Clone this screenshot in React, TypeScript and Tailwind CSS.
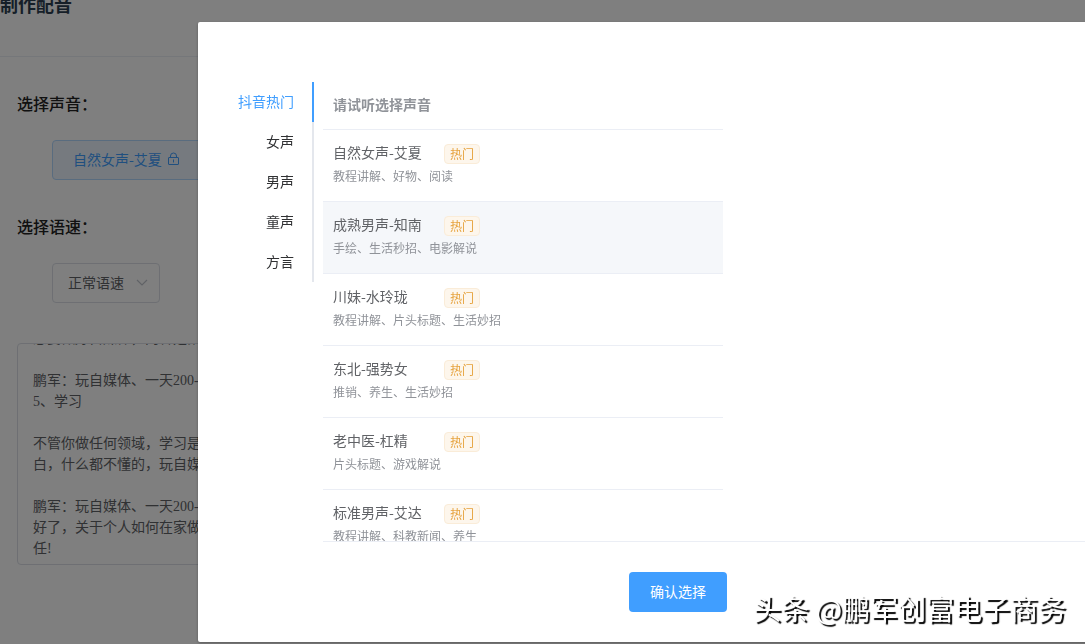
import { useEffect, useRef, useState } from "react";

type Voice = {
  name: string;
  scenes: string;
};

const categories = ["抖音热门", "女声", "男声", "童声", "方言"];

const voices: Voice[] = [
  { name: "自然女声-艾夏", scenes: "教程讲解、好物、阅读" },
  { name: "成熟男声-知南", scenes: "手绘、生活秒招、电影解说" },
  { name: "川妹-水玲珑", scenes: "教程讲解、片头标题、生活妙招" },
  { name: "东北-强势女", scenes: "推销、养生、生活妙招" },
  { name: "老中医-杠精", scenes: "片头标题、游戏解说" },
  { name: "标准男声-艾达", scenes: "教程讲解、科教新闻、养生" },
];

const script = `想要做好自媒体，内容是第一位的

鹏军：玩自媒体、一天200-
5、学习

不管你做任何领域，学习是
白，什么都不懂的，玩自媒

鹏军：玩自媒体、一天200-
好了，关于个人如何在家做
任!`;

function LockIcon() {
  return (
    <svg viewBox="0 0 14 14" className="h-3.5 w-3.5" fill="none" stroke="currentColor" aria-hidden="true">
      <rect x="1.5" y="5.5" width="10" height="7" rx="0.5" />
      <path d="M3.5 5.5V4a3 3 0 0 1 6 0v1.5M6.5 7.5v3" />
    </svg>
  );
}

function ChevronIcon() {
  return (
    <svg
      viewBox="0 0 12 8"
      className="pointer-events-none absolute top-4 right-3 h-2 w-3 text-[#c0c4cc]"
      fill="none"
      stroke="currentColor"
      strokeWidth="1.2"
      aria-hidden="true"
    >
      <path d="M1 1l5 5L11 1" />
    </svg>
  );
}

function DubbingForm() {
  const textRef = useRef<HTMLTextAreaElement>(null);

  // keep the end of the script in view
  useEffect(() => {
    if (textRef.current) textRef.current.scrollTop = textRef.current.scrollHeight;
  }, []);

  return (
    <div className="min-h-screen bg-white">
      <header className="h-[57px] overflow-hidden border-b border-[#ebeef5]">
        <h1 className="text-lg leading-2 font-bold text-[#2c3e50]">制作配音</h1>
      </header>

      <main className="px-[17px] pt-[34px]">
        <h2 className="text-base leading-6 font-medium text-[#222]">选择声音：</h2>
        <button
          type="button"
          className="mt-[25px] ml-[35px] flex h-10 w-[200px] items-center gap-[5px] rounded border border-[#b3d8ff] bg-[#ecf5ff] px-5 pb-0.5 text-sm text-[#409eff]"
        >
          自然女声-艾夏
          <LockIcon />
        </button>

        <h2 className="mt-[34px] text-base leading-6 font-medium text-[#222]">
          <label htmlFor="speed">选择语速：</label>
        </h2>
        <div className="relative mt-[25px] ml-[35px] w-[108px]">
          <select
            id="speed"
            className="h-10 w-full appearance-none rounded border border-[#dcdfe6] bg-white px-[15px] pb-0.5 text-sm text-[#606266]"
          >
            <option>正常语速</option>
          </select>
          <ChevronIcon />
        </div>

        <textarea
          ref={textRef}
          aria-label="配音文案"
          defaultValue={script}
          className="mt-10 block h-[222px] w-full resize-none overflow-hidden rounded border border-[#dcdfe6] px-[15px] py-[5px] font-['Liberation_Serif','Noto_Sans_CJK_SC',serif] text-sm leading-[21px] text-[#606266]"
        />
      </main>
    </div>
  );
}

function VoiceRow({ voice, selected, onSelect }: { voice: Voice; selected: boolean; onSelect: () => void }) {
  return (
    <tr onClick={onSelect} className={`h-[72px] border-b border-[#ebeef5] ${selected ? "bg-[#f5f7fa]" : "bg-white"}`}>
      <td className="px-2.5 pt-3 pb-3 align-top">
        <div className="flex h-[23px] items-start text-sm leading-[21px] text-[#606266]">
          <span className="w-[111px]">{voice.name}</span>
          <span className="mt-0.5 h-5 rounded border border-[#faecd8] bg-[#fdf6ec] px-[5px] text-xs leading-[18px] text-[#e6a23c]">
            热门
          </span>
        </div>
        <p className="text-xs leading-[21px] text-[#909399]">{voice.scenes}</p>
      </td>
    </tr>
  );
}

function VoiceDialog() {
  const [category, setCategory] = useState("抖音热门");
  const [selected, setSelected] = useState(1);

  return (
    <div className="fixed inset-0 flex items-start overflow-hidden bg-black/50 pt-[22px] pl-[198px]">
      <div
        role="dialog"
        aria-label="选择声音"
        className="w-[960px] shrink-0 rounded-xs bg-white pt-[60px] shadow-[0_1px_3px_rgba(0,0,0,0.3)]"
      >
        <div className="flex h-[459px] items-start gap-[9px] overflow-hidden pl-5">
          <nav className="flex w-24 flex-col">
            {categories.map((item) => (
              <button
                key={item}
                type="button"
                onClick={() => setCategory(item)}
                className={`h-10 border-r-2 pr-[18px] pb-0.5 text-right text-sm ${
                  item === category ? "border-[#409eff] text-[#409eff]" : "border-[#e4e7ed] text-[#303133]"
                }`}
              >
                {item}
              </button>
            ))}
          </nav>

          <table className="w-[400px] border-collapse">
            <thead>
              <tr className="h-[47px] border-b border-[#ebeef5]">
                <th className="px-2.5 pb-0.5 text-left text-sm font-bold text-[#909399]">请试听选择声音</th>
              </tr>
            </thead>
            <tbody>
              {voices.map((voice, index) => (
                <VoiceRow
                  key={voice.name}
                  voice={voice}
                  selected={index === selected}
                  onSelect={() => setSelected(index)}
                />
              ))}
            </tbody>
          </table>
        </div>

        <footer className="ml-[125px] border-t border-[#ebeef5] py-[30px]">
          <div className="-ml-[125px] flex justify-center">
            <button type="button" className="h-10 rounded bg-[#409eff] px-[21px] pb-0.5 text-sm text-white">
              确认选择
            </button>
          </div>
        </footer>
      </div>
    </div>
  );
}

export default function App() {
  return (
    <div className="font-['Noto_Sans_CJK_SC',sans-serif]">
      <DubbingForm />
      <VoiceDialog />
      <p className="pointer-events-none fixed right-[19px] bottom-4 text-[28px] leading-10 text-white [text-shadow:2px_2px_1px_#000]">
        头条 @鹏军创富电子商务
      </p>
    </div>
  );
}
